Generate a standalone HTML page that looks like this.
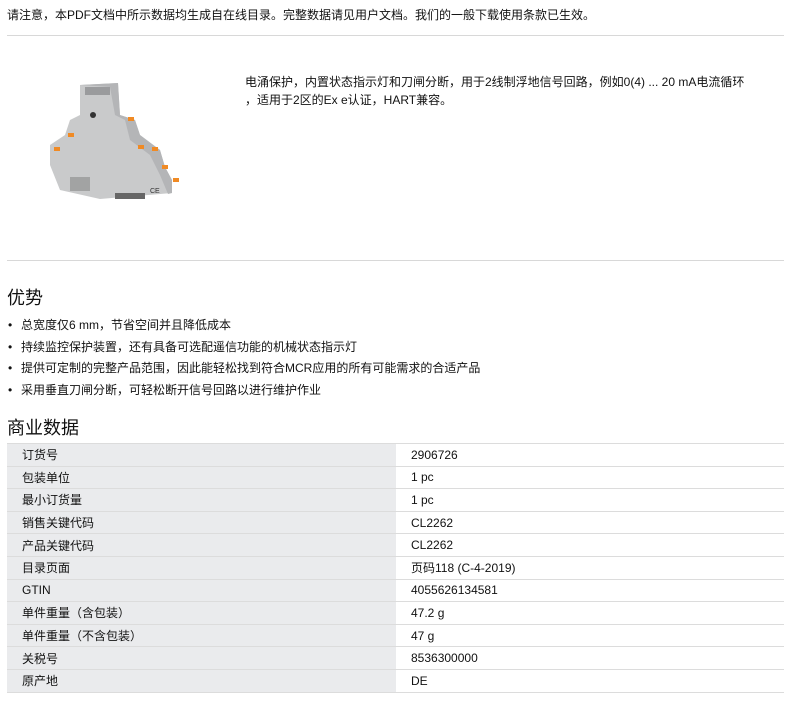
<!DOCTYPE html>
<html><head><meta charset="utf-8"><style>
*{margin:0;padding:0;box-sizing:border-box}
body{width:790px;height:701px;background:#fff;font-family:"Liberation Sans","Noto Sans CJK SC",sans-serif;color:#111;font-size:12px;position:relative;overflow:hidden}
.a{position:absolute;white-space:nowrap}
.hr{position:absolute;left:7px;width:777px;height:1px;background:#d8d8d8}
h2{position:absolute;font-weight:normal;font-size:18px;left:7px}
.b{position:absolute;left:8px;font-size:12px}
.b span{display:inline-block;width:13px}
table{position:absolute;left:7px;top:443px;width:777px;border-collapse:collapse}
td{height:22.6px;padding:0 0 0 15px;border-top:1px solid #dcdcdc;font-size:12px}
td.l{width:389px;background:#eaebed}
tr:last-child td{border-bottom:1px solid #dcdcdc}
</style></head><body>
<div class="a" style="left:7px;top:6px">请注意，本PDF文档中所示数据均生成自在线目录。完整数据请见用户文档。我们的一般下载使用条款已生效。</div>
<div class="hr" style="top:35px"></div>
<svg class="a" style="left:40px;top:75px" width="145" height="130" viewBox="0 0 145 130">
<polygon points="40,10 78,8 80,40 95,45 100,60 120,75 125,92 132,105 132,118 60,124 20,115 10,90 10,70 25,60 30,45 40,40" fill="#c9cacb"/>
<polygon points="40,10 78,8 80,40 95,45 100,60 120,75 125,92 132,105 132,118 128,119 120,100 110,80 90,65 85,45 75,40 70,12" fill="#b4b5b7"/>
<rect x="45" y="12" width="25" height="8" fill="#9a9b9d"/>
<circle cx="53" cy="40" r="3" fill="#333"/>
<rect x="30" y="102" width="20" height="14" fill="#888" opacity=".6"/>
<rect x="75" y="118" width="30" height="6" fill="#666"/>
<rect x="28" y="58" width="6" height="4" fill="#f08a24"/><rect x="14" y="72" width="6" height="4" fill="#f08a24"/>
<rect x="88" y="42" width="6" height="4" fill="#f08a24"/><rect x="98" y="70" width="6" height="4" fill="#f08a24"/>
<rect x="112" y="72" width="6" height="4" fill="#f08a24"/><rect x="122" y="90" width="6" height="4" fill="#f08a24"/>
<rect x="133" y="103" width="6" height="4" fill="#f08a24"/>
<text x="110" y="118" font-size="7" fill="#333" font-family="Liberation Sans">CE</text>
</svg>
<div class="a" style="left:245px;top:73px">电涌保护，内置状态指示灯和刀闸分断，用于2线制浮地信号回路，例如0(4) ... 20 mA电流循环</div>
<div class="a" style="left:245px;top:91px">，适用于2区的Ex e认证，HART兼容。</div>
<div class="hr" style="top:260px"></div>
<h2 style="top:284px">优势</h2>
<div class="b" style="top:316px"><span>•</span>总宽度仅6 mm，节省空间并且降低成本</div>
<div class="b" style="top:338px"><span>•</span>持续监控保护装置，还有具备可选配遥信功能的机械状态指示灯</div>
<div class="b" style="top:359px"><span>•</span>提供可定制的完整产品范围，因此能轻松找到符合MCR应用的所有可能需求的合适产品</div>
<div class="b" style="top:381px"><span>•</span>采用垂直刀闸分断，可轻松断开信号回路以进行维护作业</div>
<h2 style="top:414px">商业数据</h2>
<table>
<tr><td class="l">订货号</td><td>2906726</td></tr>
<tr><td class="l">包装单位</td><td>1 pc</td></tr>
<tr><td class="l">最小订货量</td><td>1 pc</td></tr>
<tr><td class="l">销售关键代码</td><td>CL2262</td></tr>
<tr><td class="l">产品关键代码</td><td>CL2262</td></tr>
<tr><td class="l">目录页面</td><td>页码118 (C-4-2019)</td></tr>
<tr><td class="l">GTIN</td><td>4055626134581</td></tr>
<tr><td class="l">单件重量（含包装）</td><td>47.2 g</td></tr>
<tr><td class="l">单件重量（不含包装）</td><td>47 g</td></tr>
<tr><td class="l">关税号</td><td>8536300000</td></tr>
<tr><td class="l">原产地</td><td>DE</td></tr>
</table>
</body></html>
